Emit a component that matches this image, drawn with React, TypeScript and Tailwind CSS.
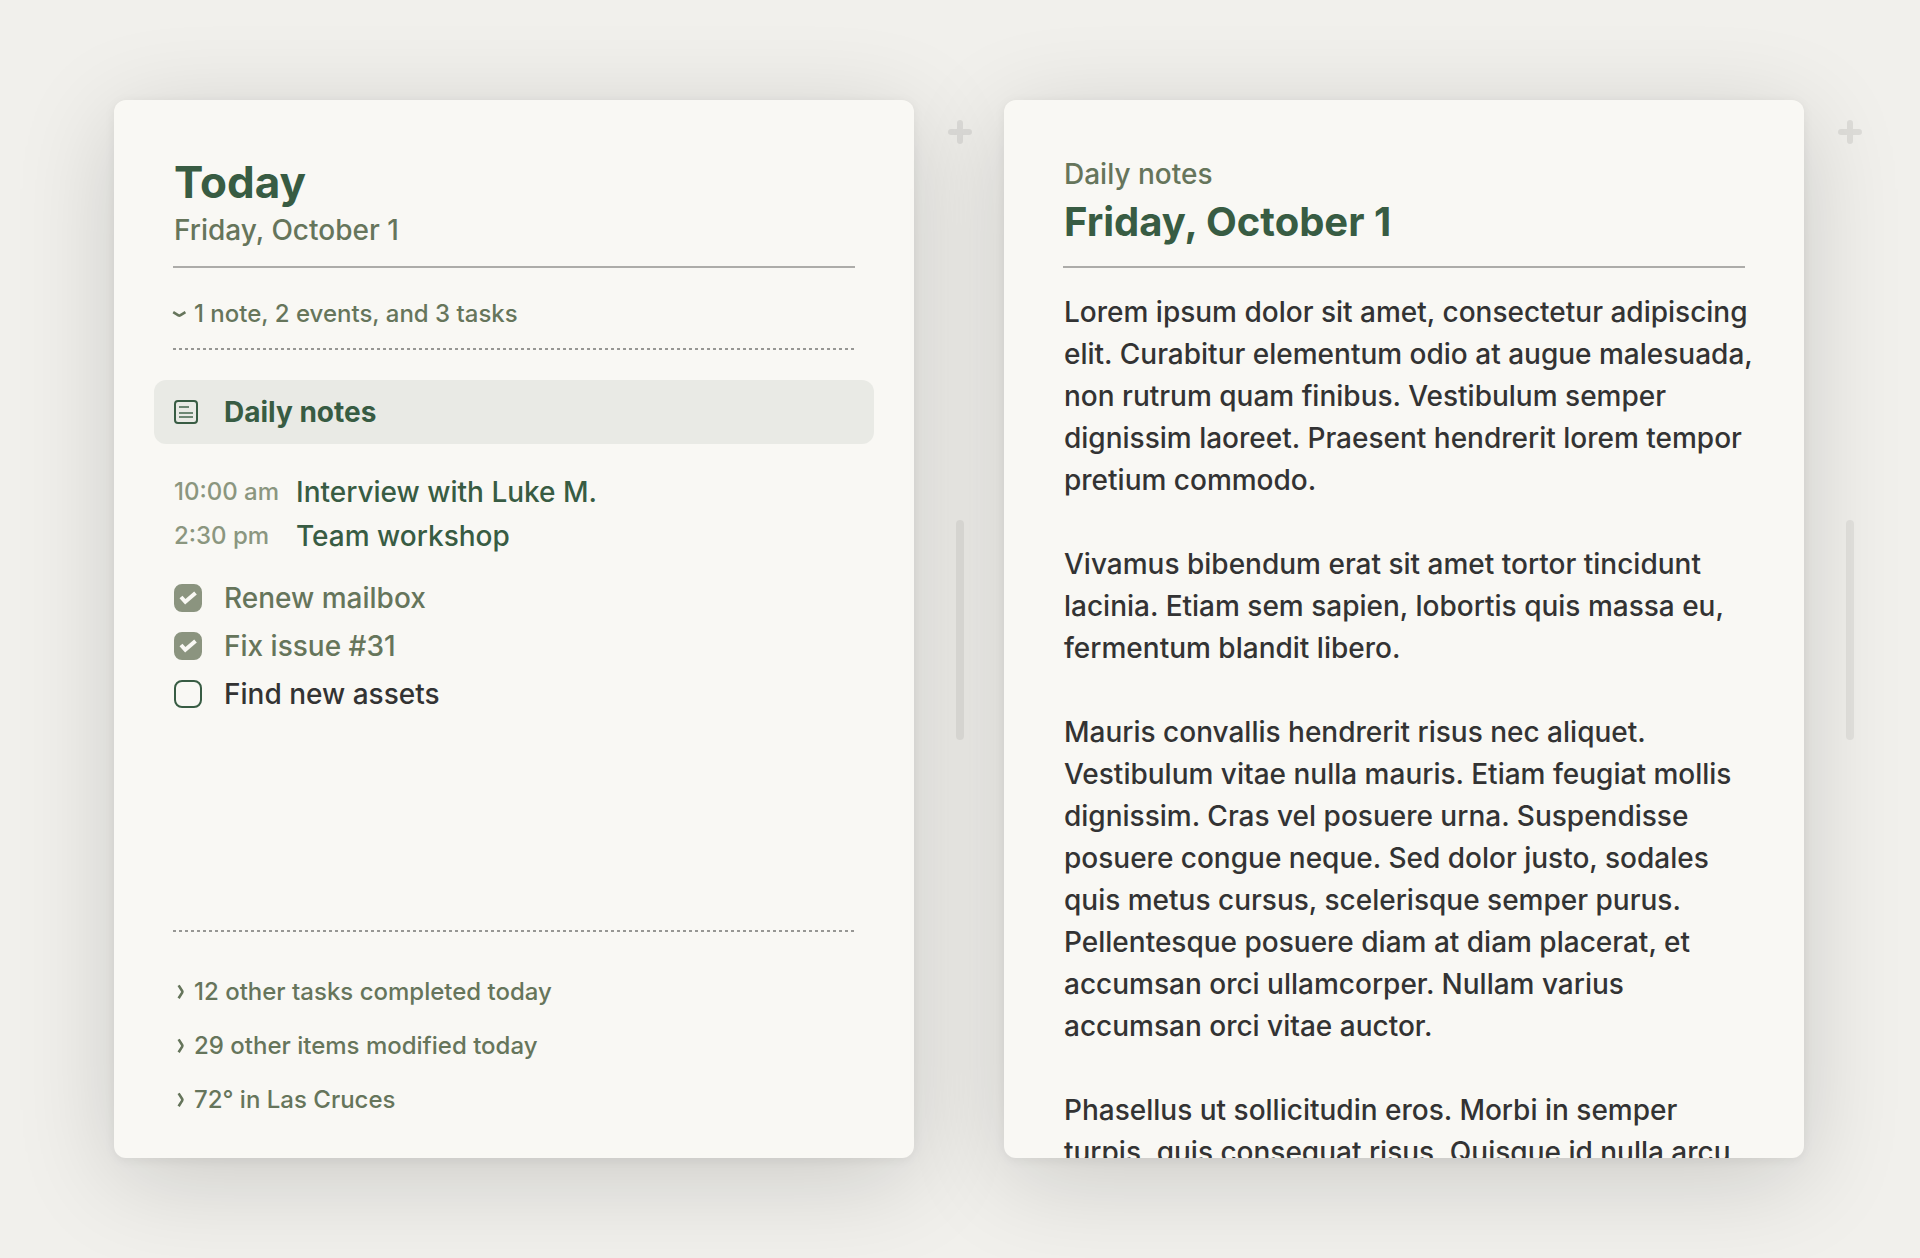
import { useState } from "react";
import clsx from "clsx";

const events = [
  { time: "10:00 am", title: "Interview with Luke M." },
  { time: "2:30 pm", title: "Team workshop" },
];

const initialTasks = [
  { id: "mailbox", label: "Renew mailbox", done: true },
  { id: "issue", label: "Fix issue #31", done: true },
  { id: "assets", label: "Find new assets", done: false },
];

const summaries = [
  "12 other tasks completed today",
  "29 other items modified today",
  "72° in Las Cruces",
];

const paragraphs = [
  "Lorem ipsum dolor sit amet, consectetur adipiscing elit. Curabitur elementum odio at augue malesuada, non rutrum quam finibus. Vestibulum semper dignissim laoreet. Praesent hendrerit lorem tempor pretium commodo.",
  "Vivamus bibendum erat sit amet tortor tincidunt lacinia. Etiam sem sapien, lobortis quis massa eu, fermentum blandit libero.",
  "Mauris convallis hendrerit risus nec aliquet. Vestibulum vitae nulla mauris. Etiam feugiat mollis dignissim. Cras vel posuere urna. Suspendisse posuere congue neque. Sed dolor justo, sodales quis metus cursus, scelerisque semper purus. Pellentesque posuere diam at diam placerat, et accumsan orci ullamcorper. Nullam varius accumsan orci vitae auctor.",
  "Phasellus ut sollicitudin eros. Morbi in semper turpis, quis consequat risus. Quisque id nulla arcu.",
];

function Card({ children }: { children: React.ReactNode }) {
  return (
    <section className="flex min-w-0 flex-1 flex-col overflow-hidden rounded-xl bg-[#f9f8f4] px-[60px] shadow-[0_2px_12px_rgba(0,0,0,0.06),0_20px_100px_rgba(0,0,0,0.16)]">
      {children}
    </section>
  );
}

function Gutter() {
  return (
    <div className="z-10 grid w-[90px] shrink-0 grid-rows-[1fr_auto_1fr] justify-items-center pt-0.5 pl-0.5">
      <button aria-label="Add card" className="mt-[18px] size-6 text-black/8">
        <svg viewBox="0 0 24 24" fill="currentColor" className="size-6">
          <path d="M12 0a3 3 0 0 1 3 3v6h6a3 3 0 0 1 0 6h-6v6a3 3 0 0 1-6 0v-6H3a3 3 0 0 1 0-6h6V3a3 3 0 0 1 3-3Z" />
        </svg>
      </button>
      <div className="h-[220px] w-2 rounded-full bg-black/6" />
    </div>
  );
}

function DottedLine() {
  return (
    <div className="-mx-px h-0.5 shrink-0 bg-[repeating-linear-gradient(to_right,#979794_0_3px,transparent_3px_6px)]" />
  );
}

function Disclosure({ label, open = false }: { label: string; open?: boolean }) {
  return (
    <button aria-expanded={open} className="flex items-center gap-1.5 text-left text-2xl leading-[30px] font-medium text-[#66755b]">
      <svg viewBox="0 0 14 14" fill="none" stroke="currentColor" strokeWidth="2.6" className="size-3.5 shrink-0 overflow-visible">
        {open ? <path d="M-.8 5.2 4.4 8.4Q5.3 8.9 6.2 8.4L11.4 5.2" /> : <path d="M4.6.4 8.2 6Q8.7 6.8 8.2 7.6L4.6 13.2" />}
      </svg>
      {label}
    </button>
  );
}

function NoteIcon() {
  return (
    <svg viewBox="0 0 24 24" fill="none" stroke="currentColor" strokeWidth="2" className="size-6 shrink-0">
      <rect x="1" y="1" width="22" height="22" rx="3" />
      <path d="M5 7h10M5 13h14M5 17h14" opacity="0.7" />
    </svg>
  );
}

export default function App() {
  const [tasks, setTasks] = useState(initialTasks);

  const toggle = (id: string) =>
    setTasks(tasks.map((t) => (t.id === id ? { ...t, done: !t.done } : t)));

  return (
    <main className="flex h-screen bg-[#f1f0ec] py-[100px] pr-[26px] pl-[114px] font-['Inter',sans-serif] text-[28px] font-medium text-[#333333]">
      <Card>
        <header className="-mx-px flex h-[168px] shrink-0 flex-col justify-end border-b-2 border-[#adaca9] px-px pb-3.5">
          <h1 className="text-[44px] leading-[48px] font-bold text-[#385c43]">Today</h1>
          <p className="mt-0.5 leading-[44px] text-[#66755b]">Friday, October 1</p>
        </header>

        <div className="flex h-20 shrink-0 items-end pb-[19px]">
          <Disclosure label="1 note, 2 events, and 3 tasks" open />
        </div>
        <DottedLine />

        <a
          href="#daily-notes"
          className="-mx-5 mt-[30px] flex h-16 shrink-0 items-center gap-[26px] rounded-xl bg-[#e9eae5] px-5 font-bold text-[#385c43]"
        >
          <NoteIcon />
          Daily notes
        </a>

        <ul className="mt-[26px]">
          {events.map((event) => (
            <li key={event.time} className="flex h-11 items-center">
              <span className="w-[122px] shrink-0 text-2xl text-[#8b967f]">{event.time}</span>
              <span className="text-[#385c43]">{event.title}</span>
            </li>
          ))}
        </ul>

        <ul className="mt-4">
          {tasks.map((task) => (
            <li key={task.id} className="flex h-12 items-center">
              <label
                className={clsx(
                  "flex items-center gap-[22px]",
                  task.done ? "text-[#66755b]" : "text-[#333333]"
                )}
              >
                <span className="grid size-7 shrink-0">
                  <input
                    type="checkbox"
                    checked={task.done}
                    onChange={() => toggle(task.id)}
                    className="col-start-1 row-start-1 size-7 appearance-none rounded-lg border-2 border-[#385c43] checked:border-[#8b947f] checked:bg-[#8b947f]"
                  />
                  {task.done && (
                    <svg viewBox="0 0 28 28" fill="none" stroke="#f9f8f4" strokeWidth="4" className="pointer-events-none col-start-1 row-start-1 size-7">
                      <path d="m7 13 4.3 4.8L21.5 9" />
                    </svg>
                  )}
                </span>
                {task.label}
              </label>
            </li>
          ))}
        </ul>

        <footer className="mt-auto">
          <DottedLine />
          <div className="flex flex-col items-start gap-6 pt-[45px] pb-[43px]">
            {summaries.map((label) => (
              <Disclosure key={label} label={label} />
            ))}
          </div>
        </footer>
      </Card>
      <Gutter />

      <Card>
        <header className="-mx-px flex h-[168px] shrink-0 flex-col justify-end border-b-2 border-[#adaca9] px-px pb-5">
          <p className="leading-[44px] text-[#66755b]">Daily notes</p>
          <h2 className="mt-0.5 text-[40px] leading-[48px] font-bold text-[#385c43]">Friday, October 1</h2>
        </header>

        <article id="daily-notes" className="-mr-4 mt-[23px] flex flex-col gap-[42px] leading-[42px]">
          {paragraphs.map((text, i) => (
            <p key={i}>{text}</p>
          ))}
        </article>
      </Card>
      <Gutter />
    </main>
  );
}
